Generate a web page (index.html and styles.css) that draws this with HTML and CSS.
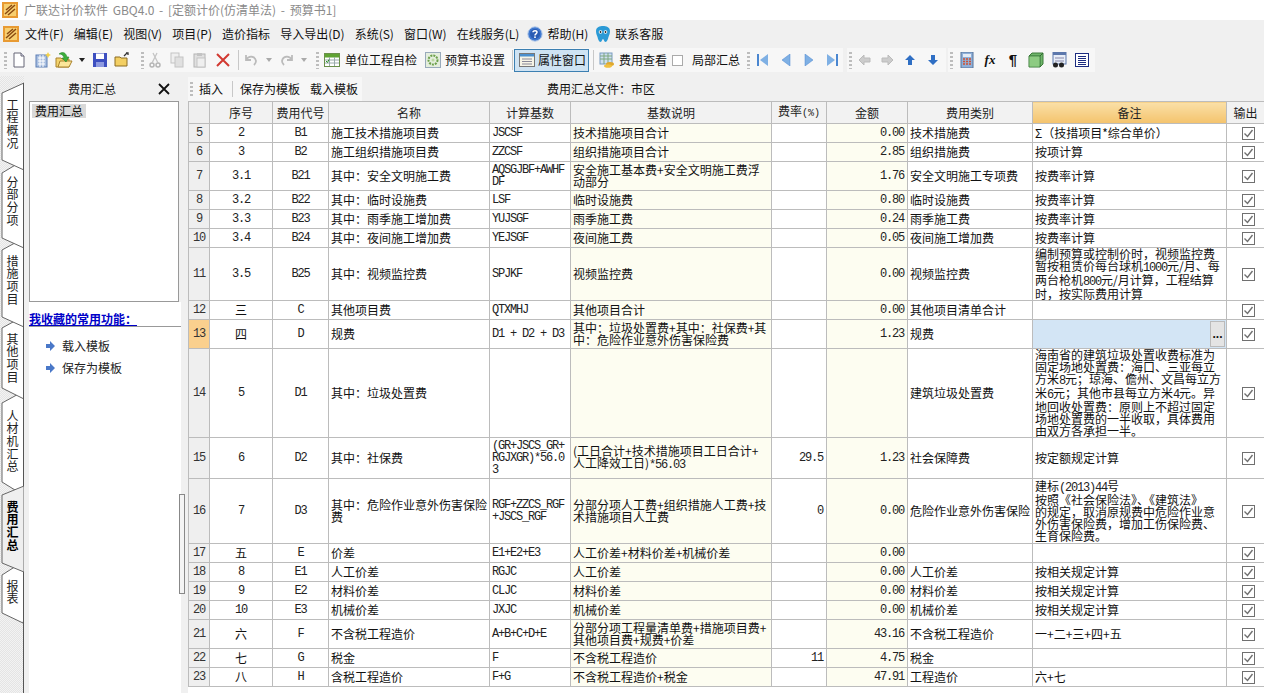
FILE: index.html
```html
<!DOCTYPE html>
<html lang="zh-CN">
<head>
<meta charset="utf-8">
<title>广联达计价软件 GBQ4.0</title>
<link rel="stylesheet" href="styles.css">
</head>
<body>
<svg class="defs" width="0" height="0">
  <symbol id="chk" viewBox="0 0 13 13"><rect x=".5" y=".5" width="12" height="12" fill="#fff" stroke="#707070"/><path d="M2.5 6.5 5.5 9.5 10.5 3" fill="none" stroke="#707070" stroke-width="1.4"/></symbol>
  <symbol id="logo" viewBox="0 0 16 16"><rect width="16" height="16" fill="#e89a32"/><rect x="2" y="2" width="12" height="12" fill="#f7cf70"/><path d="M3 12 13 3M4 8 10 3M6 13 13 7" stroke="#8a4a12" stroke-width="1.5" fill="none"/></symbol>
  <symbol id="arrow" viewBox="0 0 10 10"><path d="M1 3h4V0l5 5-5 5V7H1z" fill="#4a78c8"/></symbol>
</svg>

<header class="titlebar">
  <svg class="ic16"><use href="#logo"/></svg>
  <span class="title-text">广联达计价软件 GBQ4.0 - [定额计价(仿清单法) - 预算书1]</span>
</header>

<nav class="menubar">
  <svg class="ic16"><use href="#logo"/></svg>
  <span class="mi first">文件(F)</span><span class="mi">编辑(E)</span><span class="mi">视图(V)</span><span class="mi">项目(P)</span><span class="mi">造价指标</span><span class="mi">导入导出(D)</span><span class="mi">系统(S)</span><span class="mi">窗口(W)</span><span class="mi">在线服务(L)</span>
  <svg class="ic16 help" viewBox="0 0 16 16"><circle cx="8" cy="8" r="7.2" fill="#3f78cf" stroke="#b9cdea"/><circle cx="8" cy="8" r="5" fill="#2a5cb4"/><path d="M6 6.2C6 4.2 10 4.2 10 6.3 10 7.8 8 7.8 8 9.4" fill="none" stroke="#fff" stroke-width="1.5"/><rect x="7.2" y="10.4" width="1.6" height="1.6" fill="#fff"/></svg>
  <span class="mi tight">帮助(H)</span>
  <svg class="ic16 help2" viewBox="0 0 16 16"><path d="M1 5C1 1 5 0 8 0s7 1 7 5c0 3-1 4-1.500 6S12 16 10.500 16 9 13 8 13s-1 3-2.500 3S3 13 2.500 11 1 8 1 5z" fill="#2b9ad6"/><circle cx="5.500" cy="6" r="1.800" fill="#fff"/><circle cx="10.500" cy="6" r="1.800" fill="#fff"/><circle cx="5.500" cy="6" r=".9" fill="#222"/><circle cx="10.500" cy="6" r=".9" fill="#222"/></svg>
  <span class="mi tight">联系客服</span>
</nav>

<div class="toolbar">
  <div class="seg seg-a">
    <i class="grip"></i>
    <span class="slot w22"><svg class="ic16" viewBox="0 0 16 16"><path d="M3 1h7l3 3v11H3z" fill="#fff" stroke="#667"/><path d="M10 1v3h3" fill="#dde" stroke="#667"/></svg></span>
    <span class="slot w26"><svg class="ic16" viewBox="0 0 16 16"><rect x="1" y="3" width="11" height="12" fill="#a9bfe0" stroke="#5d7fb5"/><path d="M3 6h7M3 9h7M3 12h7M5 3v12M8 3v12" stroke="#fff"/><path d="M13 0l1 2 2 1-2 1-1 2-1-2-2-1 2-1z" fill="#f4d24a"/></svg></span>
    <span class="slot w16"><svg class="ic18" viewBox="0 0 18 18"><path d="M1 7h5l1 1h7v8H1z" fill="#f3d36c" stroke="#a9822c"/><path d="M3 16l2-6h12l-3 6z" fill="#fbe69a" stroke="#a9822c"/><path d="M4 3c4-3 7-1 8 3h2l-3 5-4-4h2C8 4 7 3 4 3z" fill="#3cae3c" stroke="#1e7a1e" stroke-width=".5"/></svg></span>
    <span class="slot w20"><i class="caret dark"></i></span>
    <span class="slot w16"><svg class="ic16" viewBox="0 0 16 16"><path d="M1 1h14v14H1z" fill="#3d4fc0"/><rect x="4" y="1.500" width="8" height="5.500" fill="#fff"/><rect x="4" y="10" width="8" height="5" fill="#8e9ae0"/></svg></span>
    <span class="slot w28"><svg class="ic16" viewBox="0 0 16 16"><path d="M1 5h5l1 1h6v8H1z" fill="#f3cf63" stroke="#8c6d22"/><path d="M10 4l3-3M12 1h2v2" stroke="#333" stroke-width="1.300" fill="none"/></svg></span>
    <i class="grip gap12"></i>
    <span class="slot w14 dim"><svg class="ic16" viewBox="0 0 16 16"><circle cx="5" cy="13" r="2" fill="none" stroke="#aaa" stroke-width="1.500"/><circle cx="11" cy="13" r="2" fill="none" stroke="#aaa" stroke-width="1.500"/><path d="M5 11 10 1M11 11 6 1" stroke="#bbb" stroke-width="1.300"/></svg></span>
    <span class="slot w30 dim"><svg class="ic16" viewBox="0 0 16 16"><rect x="2" y="1" width="8" height="10" fill="#eee" stroke="#bbb"/><rect x="6" y="5" width="8" height="10" fill="#ddd" stroke="#bbb"/></svg></span>
    <span class="slot w16 dim"><svg class="ic16" viewBox="0 0 16 16"><rect x="2" y="2" width="11" height="13" fill="#ddd" stroke="#aaa"/><rect x="5" y="1" width="5" height="3" fill="#bbb"/><rect x="5" y="6" width="8" height="9" fill="#eee" stroke="#bbb"/></svg></span>
    <span class="slot w30"><svg class="ic16" viewBox="0 0 16 16"><path d="M2 2 14 14M14 2 2 14" stroke="#d23a32" stroke-width="2"/></svg></span>
    <i class="sep"></i>
    <span class="slot w24"><svg class="ic14" viewBox="0 0 14 14"><path d="M2 2v5h5M2 7c3-5 9-4 10 1 0 2-1 3-2 4" fill="none" stroke="#bbb" stroke-width="1.800"/></svg></span>
    <span class="slot w12"><i class="caret"></i></span>
    <span class="slot w24"><svg class="ic14" viewBox="0 0 14 14"><path d="M12 2v5H7M12 7C9 2 3 3 2 8c0 2 1 3 2 4" fill="none" stroke="#bbb" stroke-width="1.800"/></svg></span>
    <span class="slot w10"><i class="caret"></i></span>
    <i class="grip gap16"></i>
    <span class="slot w14"><svg class="ic16" viewBox="0 0 16 16"><rect x=".5" y="1.500" width="15" height="13" fill="#fff" stroke="#6a8f4a"/><rect x="1" y="2" width="14" height="3.500" fill="#5fa332"/><path d="M1 8h14M1 11h14M5.500 5v9M10.500 5v9" stroke="#9aa"/><path d="M2 9l1.500 1.500L5 7.500" stroke="#2a8f2a" fill="none"/></svg></span>
    <span class="lbl ml6">单位工程自检</span>
    <span class="slot w16 ml8"><svg class="ic16" viewBox="0 0 16 16"><rect x=".5" y=".5" width="15" height="15" fill="#e4eedd" stroke="#9ab"/><circle cx="8" cy="8" r="4.500" fill="none" stroke="#6ca04a" stroke-width="2" stroke-dasharray="2 1"/><circle cx="8" cy="8" r="1.500" fill="#bcd8a0"/></svg></span>
    <span class="lbl ml4">预算书设置</span>
    <i class="sep ml7"></i>
    <span class="toggled"><svg class="ic16" viewBox="0 0 16 16"><rect x=".5" y="1.500" width="15" height="13" fill="#f6f4e6" stroke="#777"/><rect x="1" y="2" width="14" height="2.500" fill="#4a8fce"/><path d="M3 7h10M3 9.500h10M3 12h10" stroke="#889"/></svg><span class="lbl">属性窗口</span></span>
    <i class="sep ml4"></i>
    <span class="slot w16 ml5"><svg class="ic16" viewBox="0 0 16 16"><rect x="1" y="1" width="12" height="11" fill="#cfe0f0" stroke="#7a9cc0"/><path d="M1 4h12M1 7h12M5 1v11M9 1v11" stroke="#7fa77f"/><ellipse cx="11" cy="12" rx="4" ry="2" fill="#e0a82e"/><ellipse cx="9" cy="14" rx="4" ry="1.800" fill="#f0c040"/></svg></span>
    <span class="lbl ml4">费用查看</span>
    <i class="mini-box"></i>
    <span class="lbl ml9">局部汇总</span>
    <i class="grip gap7"></i>
    <span class="slot w22"><svg class="ic12" viewBox="0 0 12 12"><rect x="0" y="0" width="2" height="12" fill="#4a86d0"/><path d="M11 0v12L3 6z" fill="#7fb0e4"/></svg></span>
    <span class="slot w24"><svg class="ic12" viewBox="0 0 12 12"><path d="M10 0v12L2 6z" fill="#7fb0e4" stroke="#4a86d0" stroke-width=".5"/></svg></span>
    <span class="slot w22"><svg class="ic12" viewBox="0 0 12 12"><path d="M2 0v12l8-6z" fill="#7fb0e4" stroke="#4a86d0" stroke-width=".5"/></svg></span>
    <span class="slot w24"><svg class="ic12" viewBox="0 0 12 12"><rect x="10" y="0" width="2" height="12" fill="#4a86d0"/><path d="M1 0v12l8-6z" fill="#7fb0e4"/></svg></span>
  </div>
  <div class="seg seg-b">
    <i class="grip"></i>
    <span class="slot w22 ml2"><svg class="ic12" viewBox="0 0 12 12"><path d="M0 6l5-5v3h6v4H5v3z" fill="#ccc" stroke="#bbb"/></svg></span>
    <span class="slot w22"><svg class="ic12" viewBox="0 0 12 12"><path d="M12 6 7 1v3H1v4h6v3z" fill="#ccc" stroke="#bbb"/></svg></span>
    <span class="slot w24"><svg class="ic12" viewBox="0 0 12 12"><path d="M6 1 1 6h3v5h4V6h3z" fill="#2f6fc4"/></svg></span>
    <span class="slot w22"><svg class="ic12" viewBox="0 0 12 12"><path d="M6 11 1 6h3V1h4v5h3z" fill="#2f6fc4"/></svg></span>
  </div>
  <div class="seg seg-c">
    <i class="grip"></i>
    <span class="slot w24 ml2"><svg class="ic16" viewBox="0 0 16 16"><rect x="2" y="0" width="12" height="16" fill="#8fb0d8" stroke="#56749c"/><rect x="4" y="2" width="8" height="3" fill="#e4ecf6"/><path d="M4 7h8M4 9.500h8M4 12h8" stroke="#d05030" stroke-dasharray="2 1" stroke-width="1.300"/></svg></span>
    <span class="slot w22 fx">fx</span>
    <span class="slot w24 pil">¶</span>
    <span class="slot w22"><svg class="ic16" viewBox="0 0 16 16"><path d="M4 1h11v11l-3 3H1V4z" fill="#6fb56a" stroke="#3d7a3a"/><path d="M1 4h11v11M12 4l3-3" fill="none" stroke="#2f6a30"/><rect x="1.500" y="4.500" width="10" height="10" fill="#8dcb82"/></svg></span>
    <span class="slot w24"><svg class="ic16" viewBox="0 0 16 16"><rect x="2" y="0" width="13" height="12" fill="#e8eef8" stroke="#5c78ac"/><rect x="2" y="0" width="13" height="3" fill="#5c78ac"/><path d="M4 6h9M4 9h9" stroke="#88a"/><circle cx="4.500" cy="13" r="2.500" fill="#222"/><circle cx="10.500" cy="13" r="2.500" fill="#222"/></svg></span>
    <span class="slot w22"><svg class="ic14" viewBox="0 0 14 14"><rect x=".5" y=".5" width="13" height="13" fill="#fff" stroke="#1c2c80"/><path d="M3 3.500h8M3 5.500h8M3 7.500h8M3 9.500h8M3 11.500h8" stroke="#1c2c80"/></svg></span>
  </div>
</div>

<main class="workspace">
  <aside class="rail">
    <svg class="rail-art" viewBox="0 76 24 617">
      <g fill="#fff" stroke="#666">
        <path d="M24 619 23 623 2 613V575L13 568 24 561z"/>
        <path d="M24 494 15 490 2 482V403L13 397 24 391z"/>
        <path d="M24 399 2 388V328L13 322 24 316z"/>
        <path d="M24 327 2 317V250L13 244 24 238z"/>
        <path d="M24 248 2 238V173L12 167 24 160z"/>
        <path d="M24 170 2 160V93L24 83z"/>
        <path d="M24 572 2 563V495L24 486z" fill="#efefef"/>
      </g>
      <path d="M23.500 83V486M23.500 572V693" stroke="#555" fill="none"/>
    </svg>
    <span class="tab t77">工程概况</span>
    <span class="tab t79">分部分项</span>
    <span class="tab t78">措施项目</span>
    <span class="tab t77">其他项目</span>
    <span class="tab t91">人材机汇总</span>
    <span class="tab t79 on">费用汇总</span>
    <span class="tab">报表</span>
  </aside>

  <section class="panel">
    <div class="panel-main">
      <div class="panel-head"><span>费用汇总</span><svg class="close" viewBox="0 0 12 12"><path d="M1 1 11 11M11 1 1 11" stroke="#111" stroke-width="1.800"/></svg></div>
      <div class="listbox"><span class="list-sel">费用汇总</span></div>
      <div class="fav">
        <h2 class="fav-title">我收藏的常用功能&#xFF1A;</h2>
        <ul class="fav-list">
          <li><svg class="ic10"><use href="#arrow"/></svg>载入模板</li>
          <li><svg class="ic10"><use href="#arrow"/></svg>保存为模板</li>
        </ul>
      </div>
    </div>
    <div class="panel-side"><div class="thumb"></div></div>
  </section>

  <section class="content">
    <div class="subbar">
      <div class="subtools"><i class="grip small"></i><span class="sb-item">插入</span><i class="sep sb-sep"></i><span class="sb-item">保存为模板</span><span class="sb-item gap10">载入模板</span></div>
      <span class="file-label">费用汇总文件&#xFF1A;市区</span>
    </div>
    <div class="grid-wrap">
    <table class="grid">
      <colgroup><col class="c0"><col class="c1"><col class="c2"><col class="c3"><col class="c4"><col class="c5"><col class="c6"><col class="c7"><col class="c8"><col class="c9"><col class="c10"></colgroup>
      <thead>
        <tr class="h22"><th class="rn"></th><th>序号</th><th>费用代号</th><th>名称</th><th>计算基数</th><th>基数说明</th><th>费率<span class="pct">(%)</span></th><th>金额</th><th>费用类别</th><th class="hot">备注</th><th>输出</th></tr>
      </thead>
      <tbody>
        <tr class="h19"><td class="rn m">5</td><td class="ct m">2</td><td class="ct m">B1</td><td>施工技术措施项目费</td><td class="m">JSCSF</td><td class="ye">技术措施项目合计</td><td></td><td class="ye rt m">0.00</td><td>技术措施费</td><td>Σ&#xFF08;技措项目*综合单价&#xFF09;</td><td class="ck"><svg class="box"><use href="#chk"/></svg></td></tr>
        <tr class="h19"><td class="rn m">6</td><td class="ct m">3</td><td class="ct m">B2</td><td>施工组织措施项目费</td><td class="m">ZZCSF</td><td class="ye">组织措施项目合计</td><td></td><td class="ye rt m">2.85</td><td>组织措施费</td><td>按项计算</td><td class="ck"><svg class="box"><use href="#chk"/></svg></td></tr>
        <tr class="h29"><td class="rn m">7</td><td class="ct m">3.1</td><td class="ct m">B21</td><td>其中&#xFF1A;安全文明施工费</td><td class="m">AQSGJBF+AWHF<br>DF</td><td class="ye">安全施工基本费+安全文明施工费浮<br>动部分</td><td></td><td class="ye rt m">1.76</td><td>安全文明施工专项费</td><td>按费率计算</td><td class="ck"><svg class="box"><use href="#chk"/></svg></td></tr>
        <tr class="h19"><td class="rn m">8</td><td class="ct m">3.2</td><td class="ct m">B22</td><td>其中&#xFF1A;临时设施费</td><td class="m">LSF</td><td class="ye">临时设施费</td><td></td><td class="ye rt m">0.80</td><td>临时设施费</td><td>按费率计算</td><td class="ck"><svg class="box"><use href="#chk"/></svg></td></tr>
        <tr class="h19"><td class="rn m">9</td><td class="ct m">3.3</td><td class="ct m">B23</td><td>其中&#xFF1A;雨季施工增加费</td><td class="m">YUJSGF</td><td class="ye">雨季施工费</td><td></td><td class="ye rt m">0.24</td><td>雨季施工费</td><td>按费率计算</td><td class="ck"><svg class="box"><use href="#chk"/></svg></td></tr>
        <tr class="h19"><td class="rn m">10</td><td class="ct m">3.4</td><td class="ct m">B24</td><td>其中&#xFF1A;夜间施工增加费</td><td class="m">YEJSGF</td><td class="ye">夜间施工费</td><td></td><td class="ye rt m">0.05</td><td>夜间施工增加费</td><td>按费率计算</td><td class="ck"><svg class="box"><use href="#chk"/></svg></td></tr>
        <tr class="h53"><td class="rn m">11</td><td class="ct m">3.5</td><td class="ct m">B25</td><td>其中&#xFF1A;视频监控费</td><td class="m">SPJKF</td><td class="ye">视频监控费</td><td></td><td class="ye rt m">0.00</td><td>视频监控费</td><td>编制预算或控制价时&#xFF0C;视频监控费<br>暂按租赁价每台球机<span class="m">1000</span>元/月、每<br>两台枪机<span class="m">800</span>元/月计算&#xFF0C;工程结算<br>时&#xFF0C;按实际费用计算</td><td class="ck"><svg class="box"><use href="#chk"/></svg></td></tr>
        <tr class="h19"><td class="rn m">12</td><td class="ct">三</td><td class="ct m">C</td><td>其他项目费</td><td class="m">QTXMHJ</td><td class="ye">其他项目合计</td><td></td><td class="ye rt m">0.00</td><td>其他项目清单合计</td><td></td><td class="ck"><svg class="box"><use href="#chk"/></svg></td></tr>
        <tr class="h29"><td class="rn m active">13</td><td class="ct">四</td><td class="ct m">D</td><td>规费</td><td class="m">D1 + D2 + D3</td><td class="ye">其中&#xFF1A;垃圾处置费+其中&#xFF1A;社保费+其<br>中&#xFF1A;危险作业意外伤害保险费</td><td></td><td class="ye rt m">1.23</td><td>规费</td><td class="editing"><span class="more">...</span></td><td class="ck"><svg class="box"><use href="#chk"/></svg></td></tr>
        <tr class="h89"><td class="rn m">14</td><td class="ct m">5</td><td class="ct m">D1</td><td>其中&#xFF1A;垃圾处置费</td><td></td><td class="ye"></td><td></td><td class="ye"></td><td>建筑垃圾处置费</td><td>海南省的建筑垃圾处置收费标准为<br>固定场地处置费&#xFF1A;海口、三亚每立<br>方米<span class="m">8</span>元&#xFF1B;琼海、儋州、文昌每立方<br>米<span class="m">6</span>元&#xFF1B;其他市县每立方米<span class="m">4</span>元。异<br>地回收处置费&#xFF1A;原则上不超过固定<br>场地处置费的一半收取&#xFF0C;具体费用<br>由双方各承担一半。</td><td class="ck"><svg class="box"><use href="#chk"/></svg></td></tr>
        <tr class="h41"><td class="rn m">15</td><td class="ct m">6</td><td class="ct m">D2</td><td>其中&#xFF1A;社保费</td><td class="m">(GR+JSCS_GR+<br>RGJXGR)*56.0<br>3</td><td class="ye">(工日合计+技术措施项目工日合计+<br>人工降效工日)<span class="m">*56.03</span></td><td class="rt m">29.5</td><td class="ye rt m">1.23</td><td>社会保障费</td><td>按定额规定计算</td><td class="ck"><svg class="box"><use href="#chk"/></svg></td></tr>
        <tr class="h65"><td class="rn m">16</td><td class="ct m">7</td><td class="ct m">D3</td><td>其中&#xFF1A;危险作业意外伤害保险<br>费</td><td class="m">RGF+ZZCS_RGF<br>+JSCS_RGF</td><td class="ye">分部分项人工费+组织措施人工费+技<br>术措施项目人工费</td><td class="rt m">0</td><td class="ye rt m">0.00</td><td>危险作业意外伤害保险</td><td>建标<span class="m">(2013)44</span>号<br>按照《社会保险法》、《建筑法》<br>的规定&#xFF0C;取消原规费中危险作业意<br>外伤害保险费&#xFF0C;增加工伤保险费、<br>生育保险费。</td><td class="ck"><svg class="box"><use href="#chk"/></svg></td></tr>
        <tr class="h19"><td class="rn m">17</td><td class="ct">五</td><td class="ct m">E</td><td>价差</td><td class="m">E1+E2+E3</td><td class="ye">人工价差+材料价差+机械价差</td><td></td><td class="ye rt m">0.00</td><td></td><td></td><td class="ck"><svg class="box"><use href="#chk"/></svg></td></tr>
        <tr class="h19"><td class="rn m">18</td><td class="ct m">8</td><td class="ct m">E1</td><td>人工价差</td><td class="m">RGJC</td><td class="ye">人工价差</td><td></td><td class="ye rt m">0.00</td><td>人工价差</td><td>按相关规定计算</td><td class="ck"><svg class="box"><use href="#chk"/></svg></td></tr>
        <tr class="h19"><td class="rn m">19</td><td class="ct m">9</td><td class="ct m">E2</td><td>材料价差</td><td class="m">CLJC</td><td class="ye">材料价差</td><td></td><td class="ye rt m">0.00</td><td>材料价差</td><td>按相关规定计算</td><td class="ck"><svg class="box"><use href="#chk"/></svg></td></tr>
        <tr class="h19"><td class="rn m">20</td><td class="ct m">10</td><td class="ct m">E3</td><td>机械价差</td><td class="m">JXJC</td><td class="ye">机械价差</td><td></td><td class="ye rt m">0.00</td><td>机械价差</td><td>按相关规定计算</td><td class="ck"><svg class="box"><use href="#chk"/></svg></td></tr>
        <tr class="h29"><td class="rn m">21</td><td class="ct">六</td><td class="ct m">F</td><td>不含税工程造价</td><td class="m">A+B+C+D+E</td><td class="ye">分部分项工程量清单费+措施项目费+<br>其他项目费+规费+价差</td><td></td><td class="ye rt m">43.16</td><td>不含税工程造价</td><td>一+二+三+四+五</td><td class="ck"><svg class="box"><use href="#chk"/></svg></td></tr>
        <tr class="h19"><td class="rn m">22</td><td class="ct">七</td><td class="ct m">G</td><td>税金</td><td class="m">F</td><td class="ye">不含税工程造价</td><td class="rt m">11</td><td class="ye rt m">4.75</td><td>税金</td><td></td><td class="ck"><svg class="box"><use href="#chk"/></svg></td></tr>
        <tr class="h19"><td class="rn m">23</td><td class="ct">八</td><td class="ct m">H</td><td>含税工程造价</td><td class="m">F+G</td><td class="ye">不含税工程造价+税金</td><td></td><td class="ye rt m">47.91</td><td>工程造价</td><td>六+七</td><td class="ck"><svg class="box"><use href="#chk"/></svg></td></tr>
      </tbody>
    </table>
    </div>
  </section>
</main>
</body>
</html>
```

FILE: styles.css
```css
* { box-sizing: border-box; }
html, body { margin: 0; height: 100%; }
body {
  width: 1264px;
  height: 693px;
  overflow: hidden;
  display: flex;
  flex-direction: column;
  background: #f0f0f0;
  color: #111;
  font: 12px/14px "Noto Sans CJK SC", "Noto Sans", sans-serif;
}
.defs { position: absolute; }
i { display: block; font-style: normal; }

.ic10 { width: 10px; height: 10px; flex: none; }
.ic12 { width: 12px; height: 12px; flex: none; }
.ic14 { width: 14px; height: 14px; flex: none; }
.ic16 { width: 16px; height: 16px; flex: none; }
.ic18 { width: 18px; height: 18px; flex: none; }

/* title + menu */
.titlebar { height: 20px; background: #fff; display: flex; align-items: center; padding-left: 2px; flex: none; }
.title-text { margin-left: 6px; color: #8a8a8a; font-size: 12px; word-spacing: 2px; white-space: nowrap; }
.menubar { height: 27px; display: flex; align-items: center; padding-left: 3px; flex: none; }
.mi { margin-left: 10.1px; white-space: nowrap; }
.mi.first { margin-left: 6px; }
.mi.tight { margin-left: 4px; }
.help { margin-left: 8px; }
.help2 { margin-left: 7px; }

/* toolbar */
.toolbar { height: 29px; display: flex; padding-top: 1px; flex: none; align-items: flex-start; }
.seg { height: 24px; background: #f7f7f7; display: flex; align-items: center; flex: none; }
.seg-a { width: 843px; padding-left: 4px; }
.seg-b { width: 99px; margin-left: 4px; padding-left: 2px; }
.seg-c { width: 147px; margin-left: 2px; padding-left: 2px; }
.grip { width: 3px; height: 17px; flex: none; background: repeating-linear-gradient(#bdbdbd 0 2px, transparent 2px 4px); }
.grip.small { height: 14px; margin: 0 6px 0 2px; }
.gap12 { margin-left: 5px; margin-right: 4px; }
.gap16 { margin-left: 7px; margin-right: 6px; }
.gap7 { margin-left: 7px; margin-right: 2px; }
.slot { display: flex; align-items: center; justify-content: center; flex: none; height: 22px; }
.w10 { width: 10px; } .w12 { width: 12px; } .w14 { width: 14px; } .w16 { width: 16px; } .w18 { width: 18px; }
.w20 { width: 20px; } .w22 { width: 22px; } .w24 { width: 24px; } .w26 { width: 26px; } .w28 { width: 28px; } .w30 { width: 30px; }
.ml2 { margin-left: 2px; } .ml4 { margin-left: 4px; } .ml5 { margin-left: 5px; } .ml6 { margin-left: 6px; } .ml7 { margin-left: 7px; } .ml8 { margin-left: 8px; } .ml9 { margin-left: 9px; }
.seg-a > .grip:first-child + .slot { margin-left: 1px; }
.dim { opacity: .85; }
.caret { width: 0; height: 0; border: 3px solid transparent; border-top: 4px solid #aaa; border-bottom: 0; }
.caret.dark { border-top-color: #222; }
.sep { width: 1px; height: 20px; background: #c8c8c8; flex: none; }
.lbl { white-space: nowrap; flex: none; }
.toggled { width: 75px; height: 23px; margin-left: 1px; flex: none; display: flex; align-items: center; gap: 3px; padding-left: 4px; background: #cfe3f3; border: 1px solid #3c7fb1; }
.mini-box { width: 11px; height: 11px; margin-left: 5px; background: #fff; border: 1px solid #aaa; flex: none; }
.fx { font: italic bold 13px/22px "Liberation Serif", serif; color: #111; }
.pil { font: bold 15px/22px "Liberation Sans", sans-serif; color: #111; }

/* workspace */
.workspace { flex: 1; min-height: 0; display: flex; }
.rail {
  position: relative;
  width: 24px;
  flex: none;
  padding-top: 23px;
  display: flex;
  flex-direction: column;
  background: repeating-conic-gradient(#e4e4e4 0 25%, #f3f3f3 0 50%) 0 0 / 2px 2px;
}
.rail-art { position: absolute; top: 0; left: 0; width: 24px; height: 617px; }
.tab {
  position: relative;
  writing-mode: vertical-rl;
  text-orientation: upright;
  width: 24px;
  padding-left: 1px;
  line-height: 23px;
  letter-spacing: .7px;
  flex: none;
  color: #222;
  font-size: 12px;
}
.tab.on { font-weight: 700; color: #000; }
.t77 { height: 77px; } .t78 { height: 78px; } .t79 { height: 79px; } .t91 { height: 91px; }

.panel { width: 162px; flex: none; display: flex; }
.panel-main { width: 155px; display: flex; flex-direction: column; }
.panel-head { height: 25px; flex: none; display: flex; align-items: center; padding-left: 44px; color: #222; }
.close { width: 12px; height: 12px; margin-left: 42px; }
.listbox { margin-left: 5px; width: 150px; height: 201px; flex: none; background: #fff; border: 1px solid #999; padding: 2px; }
.list-sel { display: inline-block; background: #d9d9d9; padding: 0 3px 0 3px; line-height: 14px; }
.fav { margin-left: 5px; width: 152px; flex: 1; background: #fff; min-height: 0; }
.fav-title { margin: 0; height: 25px; padding-top: 10px; border-bottom: 1px solid #999; font-size: 12px; line-height: 14px; font-weight: 700; color: #0000c8; text-decoration: underline; white-space: nowrap; }
.fav-list { list-style: none; margin: 8px 0 0; padding: 0 0 0 16px; }
.fav-list li { height: 22px; display: flex; align-items: center; gap: 7px; color: #222; }
.panel-side { width: 7px; flex: none; }
.thumb { width: 6px; height: 100px; margin-top: 418px; background: #f4f4f4; border: 1px solid #888; }

.content { flex: 1; min-width: 0; display: flex; flex-direction: column; }
.subbar { height: 25px; flex: none; display: flex; align-items: center; padding-left: 2px; }
.subtools { width: 174px; height: 24px; display: flex; align-items: center; background: #f7f7f7; flex: none; }
.sb-item { white-space: nowrap; }
.sb-sep { margin: 0 7px 0 9px; height: 16px; }
.gap10 { margin-left: 10px; }
.file-label { margin-left: 185px; white-space: nowrap; }

.grid-wrap { flex: 1; min-height: 0; margin-left: 2px; background: #fff; }
.grid { border-collapse: collapse; table-layout: fixed; width: 1076px; background: #fff; line-height: 12px; }
.c0 { width: 21px; } .c1 { width: 63px; } .c2 { width: 56px; } .c3 { width: 161px; } .c4 { width: 81px; }
.c5 { width: 201px; } .c6 { width: 55px; } .c7 { width: 81px; } .c8 { width: 125px; } .c9 { width: 194px; } .c10 { width: 38px; }
.grid th, .grid td { border: 1px solid #bcbcbc; padding: 0 2px; white-space: nowrap; vertical-align: middle; }
.grid th { background: #f2f2f2; font-weight: 400; text-align: center; color: #222; }
.grid th.hot { background: linear-gradient(#fae0a8, #f4c36c); }
.grid .rn { background: #efefef; text-align: center; padding: 0; color: #333; }
.grid td.active { background: #fad08e; }
.pct { font: 10px/12px "Liberation Mono", monospace; }
.h19 { height: 19px; } .h22 { height: 22px; } .h29 { height: 29px; } .h41 { height: 41px; } .h53 { height: 53px; } .h65 { height: 65px; } .h89 { height: 89px; }
.m { font-family: "Liberation Mono", monospace; font-size: 12px; letter-spacing: -1.2px; color: #222; }
.ct { text-align: center; }
.rt { text-align: right; }
.grid td.rt { padding-right: 3px; }
.grid td.ye { background: #fdfdf1; }
.grid td.ck { padding: 0; text-align: center; }
.box { display: block; width: 13px; height: 13px; margin: 0 auto 0 15px; }
.grid td.editing { background: #d3e5f5; position: relative; }
.more { position: absolute; right: 1px; top: 1px; bottom: 1px; width: 15px; display: flex; justify-content: center; align-items: center; background: #e4e4e4; border: 1px solid #bbb; font: bold 12px/12px "Liberation Sans", sans-serif; }
```
